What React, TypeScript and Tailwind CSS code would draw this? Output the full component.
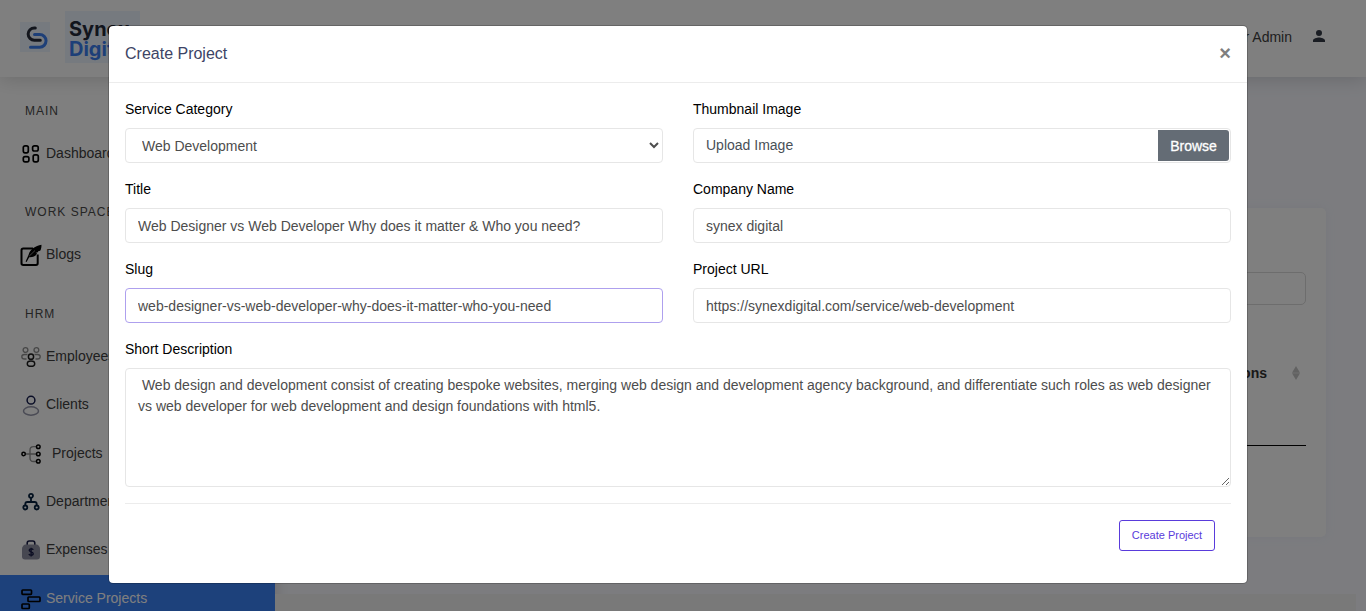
import React from 'react';

type IconProps = { children: React.ReactNode; className?: string };

function Icon({ children, className = '' }: IconProps) {
  return (
    <svg viewBox="0 0 22 22" className={`h-[22px] w-[22px] shrink-0 ${className}`} fill="none" strokeWidth="1.5">
      {children}
    </svg>
  );
}

function DashboardIcon() {
  return (
    <Icon className="mt-0.5">
      <g stroke="#000" strokeWidth="1.700">
        <rect x="3.300" y="2.800" width="5" height="7" rx="1.700" />
        <rect x="12.600" y="2.800" width="5.600" height="5.200" rx="1.700" />
        <rect x="3.300" y="13.600" width="5.600" height="5.200" rx="1.700" />
        <rect x="13.200" y="11.800" width="5.100" height="7" rx="1.700" />
      </g>
    </Icon>
  );
}

function BlogIcon() {
  return (
    <Icon className="mt-1 overflow-visible">
      <path d="M13 3.600H3.200Q1.500 3.600 1.500 5.300V18.200Q1.500 19.900 3.200 19.900H16Q17.700 19.900 17.700 18.200V9.500" stroke="#000" strokeWidth="2" />
      <path d="M21.500-.2C15.500.8 10 4.300 8.600 9.800L5.600 16.500l1 .5 2.600-4.700c3.700.2 6.600-1.200 8-4l-1.800-.3 3-1-.5-.8 2.300-.4c1-1.800 1.300-3.400 1.300-6z" fill="#000" />
      <path d="M9.300 11 15 5.500" stroke="#fff" strokeWidth=".5" />
    </Icon>
  );
}

function EmployeeIcon() {
  return (
    <Icon className="mt-0.5">
      <g stroke="#8f8f8f" strokeWidth="1.300">
        <circle cx="5.500" cy="4" r="2.400" />
        <circle cx="16.400" cy="4" r="2.400" />
        <path d="M7.500 8.500H4.500Q1.800 8.500 1.800 10.700T4.500 13H6.500M14.500 8.500h3Q20.200 8.500 20.200 10.700T17.500 13H15.500" />
      </g>
      <g stroke="#1c1c1c">
        <circle cx="11" cy="10.700" r="2.600" />
        <ellipse cx="11" cy="17.700" rx="3.700" ry="2.600" />
      </g>
    </Icon>
  );
}

function ClientIcon() {
  return (
    <Icon className="mt-[3px]">
      <circle cx="11" cy="5.200" r="3.900" stroke="#141b4d" />
      <ellipse cx="11" cy="16" rx="7.500" ry="4.200" stroke="#9596aa" />
    </Icon>
  );
}

function ProjectIcon() {
  return (
    <Icon className="mt-0.5">
      <path d="M5 11H16M17 3.700H13.500Q10 3.700 10 7.200V15Q10 18.500 13.500 18.500H17" stroke="#8d8d8d" strokeWidth="1.300" />
      <g stroke="#000" fill="#fff">
        <circle cx="3.600" cy="11" r="1.700" />
        <circle cx="18.300" cy="3.700" r="1.800" />
        <circle cx="18.300" cy="11" r="1.800" />
        <circle cx="18.300" cy="18.300" r="1.800" />
      </g>
    </Icon>
  );
}

function DepartmentIcon() {
  return (
    <Icon className="mt-0.5">
      <g stroke="#06213f" strokeWidth="1.800">
        <circle cx="11" cy="4.800" r="2" />
        <circle cx="5.300" cy="16.500" r="2" />
        <circle cx="16.700" cy="16.500" r="2" />
        <path d="M11 7v4M5.300 14.500V13Q5.300 11 7.300 11H14.700Q16.700 11 16.700 13v1.500" />
      </g>
    </Icon>
  );
}

function ExpenseIcon() {
  return (
    <Icon className="mt-0.5">
      <path d="M7.200 6V4.200Q7.200 2 9.200 2h3.600Q14.800 2 14.800 4.200V6" stroke="#171b45" strokeWidth="1.600" />
      <path d="M5 5.500h12Q20 7 20 10v7.500Q20 20.500 17 20.500H5Q2 20.500 2 17.500V10Q2 7 5 5.500z" fill="#8f90a2" />
      <path d="M13.200 10.900C12.700 9.400 9.200 9.400 9.200 11.300S13.200 12.700 13.200 14.800 9.500 16.600 8.900 14.900M11.100 8.800V17.500" stroke="#171b45" strokeWidth="1.400" />
    </Icon>
  );
}

function ServiceIcon() {
  return (
    <Icon className="mt-0.5">
      <g stroke="#000" strokeWidth="1.700">
        <rect x="2" y="2" width="9.500" height="4.300" rx=".7" />
        <rect x="8" y="9" width="12" height="4.500" rx=".7" />
        <rect x="2" y="16" width="7.300" height="4.500" rx=".7" />
      </g>
    </Icon>
  );
}

function NavGroup({ children }: { children: React.ReactNode }) {
  return <div className="h-5 pl-[25px] text-xs leading-5 tracking-[1px] text-[#4a4a4a]">{children}</div>;
}

function NavItem({ icon, label, gap = 'pl-1' }: { icon: React.ReactNode; label: string; gap?: string }) {
  return (
    <div className="flex h-6 items-center pl-5 text-sm text-[#404040]">
      {icon}
      <span className={`whitespace-nowrap ${gap}`}>{label}</span>
    </div>
  );
}

function Field({ label, children }: { label: string; children: React.ReactNode }) {
  return (
    <label className="block">
      <span className="mb-2 block h-[21px] text-sm leading-[21px] text-black">{label}</span>
      {children}
    </label>
  );
}

const control =
  'block h-[35px] w-full rounded-[4px] border border-[#e6e6e6] bg-white px-3 text-sm text-[#4d4d4d] outline-none';

function Backdrop() {
  return (
    <div className="flex h-[611px] flex-col bg-[#f8f9ff]">
      <header className="relative flex h-[77px] shrink-0 items-start justify-between bg-white shadow-[0_2px_18px_rgba(0,0,0,0.16)]">
        <div className="flex items-start pl-5 pt-[11px]">
          <div className="mt-[11px] h-[30px] w-[30px] bg-[#edf5ff]">
            <svg viewBox="0 0 30 30" className="h-[30px] w-[30px]" fill="none" strokeWidth="3" strokeLinecap="round">
              <path d="M15.300 5.900h-1a6.100 6.100 0 0 0 0 12.300h6" stroke="#252b3a" />
              <path d="M14.500 12.500h5.200a6.300 6.300 0 0 1 0 12.700h-9.200" stroke="#3b7ff0" />
            </svg>
          </div>
          <div className="ml-[15px] h-[52px] w-[75px] bg-[#edf5ff] pl-1 pt-2 font-[Inter] text-xl font-bold leading-5 text-[#252b3a]">
            Synex
            <div className="text-[#3b7ff0]">Digital</div>
          </div>
        </div>
        <div className="flex items-center pr-[38px] pt-[27px] text-sm text-[#404040]">
          <span className="pr-[18px] leading-[21px]">Super Admin</span>
          <svg viewBox="0 0 24 24" className="mb-[3px] h-[18px] w-[18px] fill-[#343a46]">
            <path d="M12 12a4 4 0 1 0 0-8 4 4 0 0 0 0 8Zm0 2c-2.700 0-8 1.300-8 4v2h16v-2c0-2.700-5.300-4-8-4Z" />
          </svg>
        </div>
      </header>
      <div className="flex min-h-0 grow">
        <aside className="w-[275px] shrink-0 overflow-hidden bg-white pt-6 shadow-[2px_0_14px_rgba(0,0,0,0.12)]">
          <NavGroup>MAIN</NavGroup>
          <div className="pt-5">
            <NavItem icon={<DashboardIcon />} label="Dashboard" />
          </div>
          <div className="pt-[37px]">
            <NavGroup>WORK SPACE</NavGroup>
          </div>
          <div className="pt-5">
            <NavItem icon={<BlogIcon />} label="Blogs" />
          </div>
          <div className="pt-[38px]">
            <NavGroup>HRM</NavGroup>
          </div>
          <div className="pt-5">
            <NavItem icon={<EmployeeIcon />} label="Employees" />
          </div>
          <div className="pt-6">
            <NavItem icon={<ClientIcon />} label="Clients" />
          </div>
          <div className="flex flex-col gap-6 pt-[25px]">
            <NavItem icon={<ProjectIcon />} label="Projects" gap="pl-2.5" />
            <NavItem icon={<DepartmentIcon />} label="Departments" />
            <NavItem icon={<ExpenseIcon />} label="Expenses" />
          </div>
          <div className="mt-3.5 flex h-[46px] items-center bg-[#3b82f6] pl-5 text-sm text-white">
            <ServiceIcon />
            <span className="pl-1">Service Projects</span>
          </div>
        </aside>
        <main className="flex grow flex-col">
          <section className="ml-[30px] mr-10 mt-[131px] h-[329px] shrink-0 rounded-[5px] bg-white px-5 pt-16 shadow-[0_0_10px_rgba(180,190,210,0.15)]">
            <div className="ml-auto h-[33px] w-[200px] rounded-[5px] border border-[#dadada]" />
            <div className="flex h-[141px] items-start justify-end border-b border-black pt-[58px] text-sm font-bold text-[#333]">
              Actions
              <svg viewBox="0 0 10 16" className="ml-6 mr-[5px] mt-0.5 h-4 w-[10px] fill-[#c4c4c4]">
                <path d="M5 1 9 7.700H1zM5 15 9 8.300H1z" />
              </svg>
            </div>
          </section>
          <footer className="mr-2.5 mt-[57px] grow bg-[#f3f3f3]" />
        </main>
      </div>
    </div>
  );
}

function ProjectDialog() {
  return (
    <div role="dialog" className="h-[559px] w-[1140px] rounded-[5px] border border-black/20 bg-white bg-clip-padding">
      <div className="flex h-[57px] items-center justify-between border-b border-[#ececec] px-4">
        <h5 className="text-base text-[#3d4465]">Create Project</h5>
        <button aria-label="Close" className="pb-[3px] text-xl font-bold leading-6 text-[#7f7f7f]">×</button>
      </div>
      <form className="px-4 pt-4">
        <div className="grid grid-cols-2 gap-x-[30px] gap-y-4">
          <Field label="Service Category">
            <select className={control}>
              <option>Web Development</option>
            </select>
          </Field>
          <Field label="Thumbnail Image">
            <div className="flex h-[35px] items-center rounded-[4px] border border-[#e6e6e6] pl-3 pr-px text-sm text-[#495057]">
              <span className="grow pb-px">Upload Image</span>
              <span className="h-[31px] w-[71px] rounded-r-[3px] bg-[#646c75] text-center leading-[32px] text-white [-webkit-text-stroke:0.3px_white]">
                Browse
              </span>
            </div>
          </Field>
          <Field label="Title">
            <input className={control} defaultValue="Web Designer vs Web Developer Why does it matter & Who you need?" />
          </Field>
          <Field label="Company Name">
            <input className={control} defaultValue="synex digital" />
          </Field>
          <Field label="Slug">
            <input
              className="block h-[35px] w-full rounded-[4px] border border-[#aea0ee] bg-white px-3 text-sm text-[#4d4d4d] outline-none"
              defaultValue="web-designer-vs-web-developer-why-does-it-matter-who-you-need"
            />
          </Field>
          <Field label="Project URL">
            <input className={control} defaultValue="https://synexdigital.com/service/web-development" />
          </Field>
          <div className="col-span-2">
            <Field label="Short Description">
              <textarea
                spellCheck={false}
                className="block h-[119px] w-full rounded-[4px] border border-[#e6e6e6] px-3 py-1.5 text-sm leading-[21px] text-[#4d4d4d] outline-none"
                defaultValue=" Web design and development consist of creating bespoke websites, merging web design and development agency background, and differentiate such roles as web designer vs web developer for web development and design foundations with html5."
              />
            </Field>
          </div>
        </div>
        <div className="mt-4 flex justify-end border-t border-[#ececec] pr-4 pt-4">
          <button type="button" className="h-[31px] w-24 rounded-[3px] border border-[#593bdb] text-[11px] text-[#593bdb]">
            Create Project
          </button>
        </div>
      </form>
    </div>
  );
}

export default function App() {
  return (
    <div className="relative h-[611px] overflow-hidden font-['Liberation_Sans',Arial,sans-serif]">
      <Backdrop />
      <div className="absolute inset-0 bg-black/50 pl-[108px] pt-[25px]">
        <ProjectDialog />
      </div>
    </div>
  );
}
